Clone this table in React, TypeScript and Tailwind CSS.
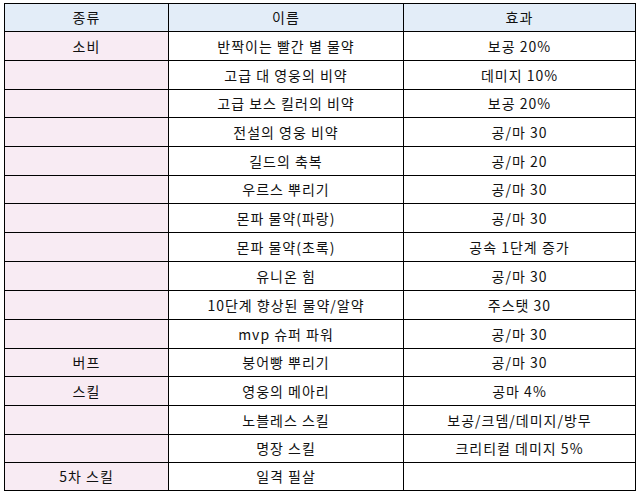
type Row = {
  kind: string;
  name: string;
  effect: string;
  h: string;
};

// row heights include the bottom border line
const rows: Row[] = [
  { kind: '소비', name: '반짝이는 빨간 별 물약', effect: '보공 20%', h: 'h-[29px]' },
  { kind: '', name: '고급 대 영웅의 비약', effect: '데미지 10%', h: 'h-[29px]' },
  { kind: '', name: '고급 보스 킬러의 비약', effect: '보공 20%', h: 'h-[28px]' },
  { kind: '', name: '전설의 영웅 비약', effect: '공/마 30', h: 'h-[29px]' },
  { kind: '', name: '길드의 축복', effect: '공/마 20', h: 'h-[29px]' },
  { kind: '', name: '우르스 뿌리기', effect: '공/마 30', h: 'h-[28px]' },
  { kind: '', name: '몬파 물약(파랑)', effect: '공/마 30', h: 'h-[29px]' },
  { kind: '', name: '몬파 물약(초록)', effect: '공속 1단계 증가', h: 'h-[29px]' },
  { kind: '', name: '유니온 힘', effect: '공/마 30', h: 'h-[29px]' },
  { kind: '', name: '10단계 향상된 물약/알약', effect: '주스탯 30', h: 'h-[29px]' },
  { kind: '', name: 'mvp 슈퍼 파워', effect: '공/마 30', h: 'h-[29px]' },
  { kind: '버프', name: '붕어빵 뿌리기', effect: '공/마 30', h: 'h-[28px]' },
  { kind: '스킬', name: '영웅의 메아리', effect: '공마 4%', h: 'h-[29px]' },
  { kind: '', name: '노블레스 스킬', effect: '보공/크뎀/데미지/방무', h: 'h-[29px]' },
  { kind: '', name: '명장 스킬', effect: '크리티컬 데미지 5%', h: 'h-[28px]' },
  { kind: '5차 스킬', name: '일격 필살', effect: '', h: 'h-[28px]' },
];

const cell = 'flex items-center justify-center border-r border-b border-black';

export default function App() {
  return (
    <div
      className="min-h-screen bg-white pt-[3px] pl-[4px] text-[14px] tracking-[1px] text-[#111]"
      style={{ fontFamily: '"Noto Sans CJK KR", "Noto Sans", sans-serif' }}
    >
      <div className="grid w-[632px] grid-cols-[164px_235px_232px] border-l border-t border-black">
        <div className={`${cell} h-[28px] bg-[#e3edf8]`}>종류</div>
        <div className={`${cell} h-[28px] bg-[#e3edf8]`}>이름</div>
        <div className={`${cell} h-[28px] bg-[#e3edf8]`}>효과</div>
        {rows.map((r, i) => (
          <div key={i} className="contents">
            <div className={`${cell} ${r.h} bg-[#f8ebf3]`}>{r.kind}</div>
            <div className={`${cell} ${r.h}`}>{r.name}</div>
            <div className={`${cell} ${r.h}`}>{r.effect}</div>
          </div>
        ))}
      </div>
    </div>
  );
}
